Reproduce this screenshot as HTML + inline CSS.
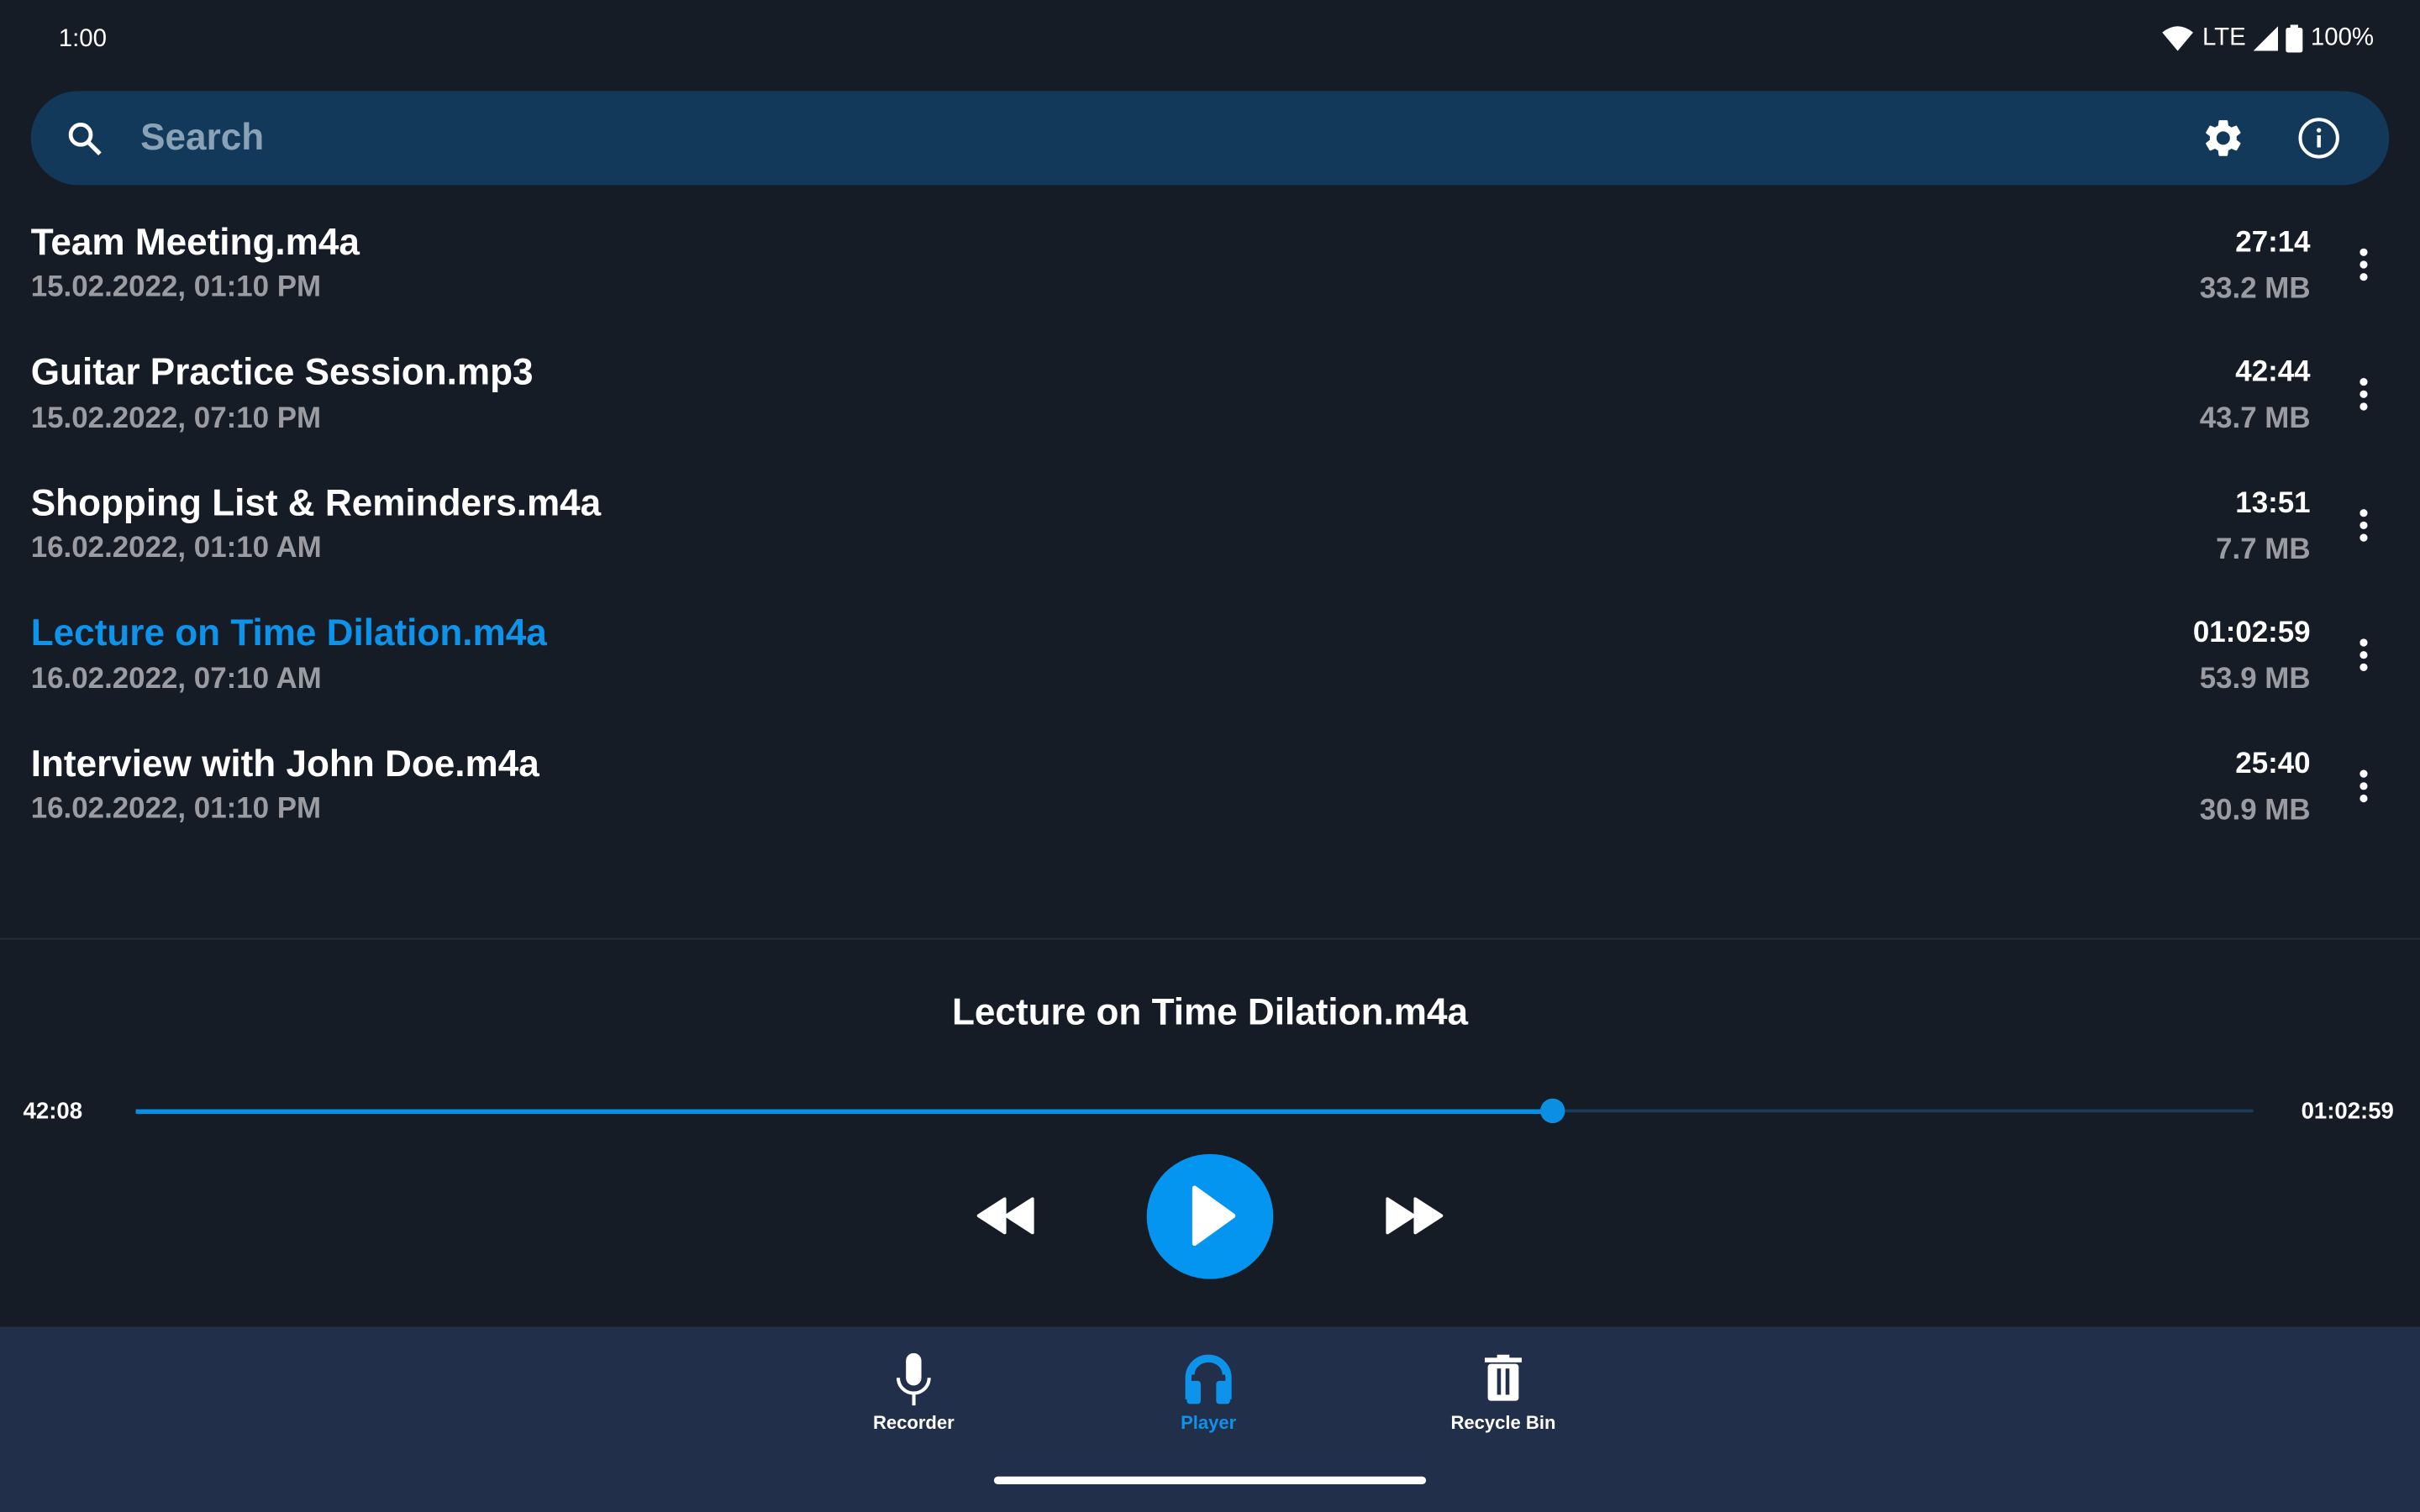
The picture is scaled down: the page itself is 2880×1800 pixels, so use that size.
<!DOCTYPE html>
<html><head><meta charset="utf-8"><style>
html,body{margin:0;padding:0;background:#161c25;width:2880px;height:1800px;overflow:hidden}
#s{position:absolute;left:0;top:0;width:1568px;height:980px;transform:scale(1.836735);transform-origin:0 0;font-family:"Liberation Sans",sans-serif;color:#fff;background:#161c25}
.a{position:absolute}
.t{font-size:24px;font-weight:bold;left:20px}
.d{font-size:19px;font-weight:bold;color:#9a9ca2;left:20px}
.r{right:71px;text-align:right}
.dur{font-size:19px;font-weight:bold}
.sz{font-size:19px;font-weight:bold;color:#9a9ca2}
.dots{left:1529px;width:6px}
.dots i{display:block;width:5px;height:5px;border-radius:50%;background:#fff;margin-bottom:3px}
</style></head><body><div id="s">
<div class="a" style="left:38px;top:17px;font-size:16px">1:00</div>
<div class="a" style="left:1400px;top:16px;font-size:16px;display:flex;align-items:center;gap:5px">
<svg width="22" height="18" viewBox="0 0 22 18"><path d="M1 5Q11-3 21 5L11 17Z" fill="#fff"/></svg>
<span>LTE</span>
<svg width="16" height="16"><path d="M0 16L16 0V16Z" fill="#fff"/></svg>
<svg width="11" height="18"><rect x="0" y="2" width="11" height="16" rx="1.5" fill="#fff"/><rect x="3" y="0" width="5" height="3" fill="#fff"/></svg>
<span>100%</span></div>
<div class="a" style="left:20px;top:59px;width:1528px;height:61px;border-radius:31px;background:#12395a"></div>
<svg class="a" style="left:42px;top:77px" width="26" height="26" viewBox="0 0 24 24"><circle cx="9.5" cy="9.5" r="6" fill="none" stroke="#fff" stroke-width="2.4"/><path d="M14 14L21 21" stroke="#fff" stroke-width="2.6"/></svg>
<div class="a" style="left:91px;top:76px;font-size:24px;font-weight:bold;color:#8aa2b6">Search</div>
<svg class="a" style="left:1426px;top:75px" width="29" height="29" viewBox="0 0 24 24"><path fill="#fff" d="M19.14 12.94c.04-.3.06-.61.06-.94s-.02-.64-.07-.94l2.030-1.58a.5.5 0 0 0 .12-.61l-1.92-3.32a.49.49 0 0 0-.59-.22l-2.39.96c-.5-.38-1.03-.7-1.62-.94l-.36-2.54a.48.48 0 0 0-.48-.41h-3.84c-.24 0-.43.17-.47.41l-.36 2.54c-.59.24-1.130.57-1.62.94l-2.39-.96a.48.48 0 0 0-.59.22L2.74 8.87a.47.47 0 0 0 .12.61l2.03 1.58c-.05.3-.09.63-.09.94s.02.64.07.94l-2.03 1.58a.5.5 0 0 0-.12.61l1.92 3.32c.12.22.37.29.59.22l2.39-.96c.5.38 1.03.7 1.62.94l.36 2.54c.05.24.24.41.48.41h3.84c.24 0 .44-.17.47-.41l.36-2.54c.59-.24 1.13-.56 1.62-.94l2.39.96c.22.08.47 0 .59-.22l1.92-3.32a.47.47 0 0 0-.12-.61zM12 15.6A3.6 3.6 0 1 1 12 8.4a3.6 3.6 0 0 1 0 7.2z"/></svg>
<svg class="a" style="left:1488px;top:75px" width="29" height="29" viewBox="0 0 24 24"><circle cx="12" cy="12" r="10" fill="none" stroke="#fff" stroke-width="1.8"/><rect x="11" y="10.5" width="2" height="6.5" fill="#fff"/><circle cx="12" cy="7.8" r="1.2" fill="#fff"/></svg>

<div class="a t" style="top:144px">Team Meeting.m4a</div><div class="a d" style="top:176px">15.02.2022, 01:10 PM</div>
<div class="a r dur" style="top:147px">27:14</div><div class="a r sz" style="top:177px">33.2 MB</div>
<div class="a dots" style="top:161px"><i></i><i></i><i></i></div>

<div class="a t" style="top:228px">Guitar Practice Session.mp3</div><div class="a d" style="top:261px">15.02.2022, 07:10 PM</div>
<div class="a r dur" style="top:231px">42:44</div><div class="a r sz" style="top:261px">43.7 MB</div>
<div class="a dots" style="top:245px"><i></i><i></i><i></i></div>

<div class="a t" style="top:313px">Shopping List &amp; Reminders.m4a</div><div class="a d" style="top:345px">16.02.2022, 01:10 AM</div>
<div class="a r dur" style="top:316px">13:51</div><div class="a r sz" style="top:346px">7.7 MB</div>
<div class="a dots" style="top:330px"><i></i><i></i><i></i></div>

<div class="a t" style="top:397px;color:#0d93ea">Lecture on Time Dilation.m4a</div><div class="a d" style="top:430px">16.02.2022, 07:10 AM</div>
<div class="a r dur" style="top:400px">01:02:59</div><div class="a r sz" style="top:430px">53.9 MB</div>
<div class="a dots" style="top:414px"><i></i><i></i><i></i></div>

<div class="a t" style="top:482px">Interview with John Doe.m4a</div><div class="a d" style="top:514px">16.02.2022, 01:10 PM</div>
<div class="a r dur" style="top:485px">25:40</div><div class="a r sz" style="top:515px">30.9 MB</div>
<div class="a dots" style="top:499px"><i></i><i></i><i></i></div>

<div class="a" style="left:0;top:608px;width:1568px;height:1px;background:#252c37"></div>
<div class="a" style="left:0;top:643px;width:1568px;text-align:center;font-size:24px;font-weight:bold">Lecture on Time Dilation.m4a</div>
<div class="a" style="left:15px;top:712px;font-size:15px;font-weight:bold">42:08</div>
<div class="a" style="left:1491px;top:712px;font-size:15px;font-weight:bold">01:02:59</div>
<div class="a" style="left:88px;top:719px;width:1372px;height:2px;background:#1d3c5a"></div>
<div class="a" style="left:88px;top:719px;width:918px;height:3px;background:#0b8fe3"></div>
<div class="a" style="left:998px;top:712px;width:16px;height:16px;border-radius:50%;background:#0b8fe3"></div>
<svg class="a" style="left:633px;top:776px" width="38" height="24" viewBox="0 0 38 24"><path d="M1 12L18 1V23Z M19 12L36 1V23Z" fill="#fff" stroke="#fff" stroke-linejoin="round" stroke-width="2"/></svg>
<div class="a" style="left:743px;top:748px;width:82px;height:81px;border-radius:50%;background:#0395f0"></div>
<svg class="a" style="left:772px;top:768px" width="30" height="40" viewBox="0 0 30 40"><path d="M2 2L27 20L2 38Z" fill="#fff" stroke="#fff" stroke-linejoin="round" stroke-width="3"/></svg>
<svg class="a" style="left:897px;top:776px" width="38" height="24" viewBox="0 0 38 24"><path d="M2 1L19 12L2 23Z M20 1L37 12L20 23Z" fill="#fff" stroke="#fff" stroke-linejoin="round" stroke-width="2"/></svg>

<div class="a" style="left:0;top:860px;width:1568px;height:120px;background:#222f4b"></div>
<svg class="a" style="left:580px;top:877px" width="24" height="34" viewBox="0 0 24 34"><rect x="7" y="0" width="10" height="21" rx="5" fill="#fff"/><path d="M2 16a10 10 0 0 0 20 0" fill="none" stroke="#fff" stroke-width="2.2"/><rect x="11" y="25" width="2.2" height="9" fill="#fff"/></svg>
<div class="a" style="left:542px;top:915px;width:100px;text-align:center;font-size:12px;font-weight:bold">Recorder</div>
<svg class="a" style="left:767px;top:877px" width="32" height="34" viewBox="0 0 32 34"><path d="M3 30V16A13 13 0 0 1 29 16V30" fill="none" stroke="#0d93ea" stroke-width="4"/><path d="M6 14A10 9 0 0 1 26 14" fill="none" stroke="#0d93ea" stroke-width="2"/><rect x="2" y="18" width="9" height="15" rx="2" fill="#0d93ea"/><rect x="21" y="18" width="9" height="15" rx="2" fill="#0d93ea"/></svg>
<div class="a" style="left:733px;top:915px;width:100px;text-align:center;font-size:12px;font-weight:bold;color:#0d93ea">Player</div>
<svg class="a" style="left:962px;top:878px" width="24" height="30" viewBox="0 0 24 30"><rect x="0" y="2" width="24" height="3" fill="#fff"/><rect x="8" y="0" width="8" height="3" fill="#fff"/><rect x="2" y="6" width="20" height="24" rx="2" fill="#fff"/><rect x="8" y="9" width="2.5" height="17" fill="#222f4b"/><rect x="13.5" y="9" width="2.5" height="17" fill="#222f4b"/></svg>
<div class="a" style="left:914px;top:915px;width:120px;text-align:center;font-size:12px;font-weight:bold">Recycle Bin</div>
<div class="a" style="left:644px;top:957px;width:280px;height:5px;border-radius:3px;background:#fff"></div>
</div></body></html>
